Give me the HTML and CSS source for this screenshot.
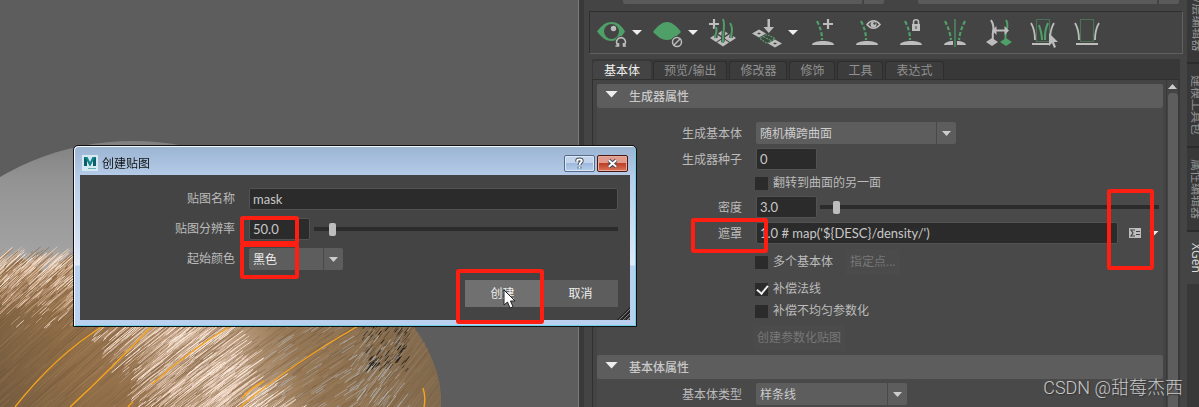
FILE: index.html
```html
<!DOCTYPE html>
<html lang="zh-CN">
<head>
    <meta charset="UTF-8">
    <meta name="viewport" content="width=device-width, initial-scale=1.0">
    <title>XGen</title>
    <link rel="stylesheet" href="styles.css">
</head>
<body>
    <div class="app">
        <main class="viewport">
            <canvas class="scene" id="scene" width="580" height="407"></canvas>
        </main>

        <section class="panel">
            <div class="top-bar">
                <select class="top-select" aria-label="集合"><option></option></select>
                <select class="top-select" aria-label="描述"><option></option></select>
            </div>

            <div class="toolbar">
                <button class="tool" type="button" aria-label="刷新预览">
                    <svg viewBox="0 0 30 30">
                        <path class="green" d="M1 13.500C6 7 10 4 15.500 4S25 7 29 13.500C25 20 21 23 15.500 23S6 20 1 13.500z"/>
                        <circle class="bg" cx="15.500" cy="13.500" r="7.500"/>
                        <circle class="grey" cx="17.500" cy="10.500" r="2.700"/>
                        <circle class="bg" cx="25" cy="24" r="6"/>
                        <path class="line-grey" stroke-width="1.600" d="M22 27.500A4.500 4.500 0 1 1 28 27.500M19.500 28h3v-3M30 28h-2.500v-3"/>
                    </svg>
                </button>
                <button class="arrow" type="button" aria-label="刷新选项"></button>
                <button class="tool" type="button" aria-label="禁用预览">
                    <svg viewBox="0 0 30 30">
                        <path class="green" d="M1 14C6 7 11 4 15 4s9 3 14 10c-5 5-9 8-14 8S6 19 1 14z"/>
                        <circle class="bg" cx="25" cy="24" r="6"/>
                        <circle class="line-grey" stroke-width="1.500" cx="25" cy="24" r="4.500"/>
                        <path class="line-grey" stroke-width="1.500" d="M22 27l6-6"/>
                    </svg>
                </button>
                <button class="arrow" type="button" aria-label="预览选项"></button>
                <button class="tool" type="button" aria-label="添加基本体">
                    <svg viewBox="0 0 30 30">
                        <path class="grey" d="M8 16l6 4-6 4-6-4zM15 20.500l6 4-6 4-6-4zM22 16l6 4-6 4-6-4zM15 12l5 3.500-5 3.500-5-3.500z"/>
                        <path class="line-grey" stroke-width="2.200" d="M6 1v10M1 6h10"/>
                        <path class="line-bg" stroke-width="3.500" d="M15 1c3 8-1 14 0 23M23 5c3 6 0 10 0 15M8 9c2 5-1 6 0 11"/>
                        <path class="line-green" stroke-width="2" d="M15 1c3 8-1 14 0 24M22 5c4 6 1 10 1 15M8 9c2 5-1 6-1 11"/>
                    </svg>
                </button>
                <button class="tool" type="button" aria-label="移动基本体">
                    <svg viewBox="0 0 30 30">
                        <path class="grey" d="M0 15.500l7-4 7 4-7 4zM16 25.500l7-4 7 4-7 4zM15.500 1h2.500v8h4l-5.200 6-5.300-6h4z"/>
                        <path class="bg" d="M5 15.500l2-1 2 1-2 1zM21 25.500l2-1 2 1-2 1z"/>
                        <path class="line-green" stroke-width="1.200" stroke-dasharray="2 1" d="M8 20.500l7-4 8 4-8 5zM11.500 18.500l7.500 4"/>
                    </svg>
                </button>
                <button class="arrow" type="button" aria-label="移动选项"></button>
                <button class="tool" type="button" aria-label="添加导向">
                    <svg viewBox="0 0 30 30">
                        <path class="grey" d="M4 27c0-3 6-4 11-4s11 1 11 4z"/>
                        <path class="line-green" stroke-width="2.200" stroke-dasharray="4 2" d="M9 3c3 6 5 11 5 19"/>
                        <path class="line-grey" stroke-width="2.200" d="M20 1v10M15 6h10"/>
                    </svg>
                </button>
                <button class="tool" type="button" aria-label="显示导向">
                    <svg viewBox="0 0 30 30">
                        <path class="grey" d="M4 27c0-3 6-4 11-4s11 1 11 4z"/>
                        <path class="line-green" stroke-width="2.200" stroke-dasharray="4 2" d="M9 3c3 6 5 11 5 19"/>
                        <path class="line-grey" stroke-width="1.600" d="M15 6.500c4-5 9-5 13 0-4 5-9 5-13 0z"/>
                        <circle class="grey" cx="21.500" cy="6.500" r="3"/>
                        <circle class="bg" cx="22.500" cy="5.500" r="1.200"/>
                    </svg>
                </button>
                <button class="tool" type="button" aria-label="锁定导向">
                    <svg viewBox="0 0 30 30">
                        <path class="grey" d="M4 27c0-3 6-4 11-4s11 1 11 4zM16 6h8v7h-8z"/>
                        <path class="line-green" stroke-width="2.200" stroke-dasharray="4 2" d="M9 3c3 6 5 11 5 19"/>
                        <path class="line-grey" stroke-width="1.600" d="M17.500 7V4c0-3 5-3 5 0v3"/>
                        <path class="bg" d="M19.500 8h1v3h-1z"/>
                    </svg>
                </button>
                <button class="tool" type="button" aria-label="镜像导向">
                    <svg viewBox="0 0 30 30">
                        <path class="grey" d="M4 27c0-2 4-4 9-4v4zM26 27c0-2-4-4-9-4v4z"/>
                        <path class="line-green" stroke-width="2.200" stroke-dasharray="4 2" d="M5 3c3 6 5 11 6 19M25 3c-3 6-5 11-6 19"/>
                        <path class="line-green" stroke-width="1.200" d="M15 1v28"/>
                    </svg>
                </button>
                <button class="tool" type="button" aria-label="传递基本体">
                    <svg viewBox="0 0 30 30">
                        <path class="grey" d="M8 20l6 4-6 4-6-4z"/>
                        <path class="green" d="M22 20l6 4-6 4-6-4z"/>
                        <path class="line-grey" stroke-width="2" d="M7 2c3 5 3 8 2 12s1 6-1 10"/>
                        <path class="line-green" stroke-width="2" d="M22 2c3 5 1 8 0 12s0 6-1 10"/>
                        <path class="line-bg" stroke-width="4" d="M11 12.500h11"/>
                        <path class="grey" d="M8 12.500l4.500-4.500v3.500h8V8l4.500 4.500-4.500 4.500v-3.500h-8V17z"/>
                    </svg>
                </button>
                <button class="tool" type="button" aria-label="选择基本体">
                    <svg viewBox="0 0 30 30">
                        <path class="line-grey" stroke-width="1.800" d="M3 5c3 5 4 10 4 17M26 5c-3 5-4 10-4 17"/>
                        <path class="grey" d="M4 25h17v2H4z"/>
                        <path class="line-green" stroke-width="1.200" stroke-dasharray="1 1" d="M8.500 1.500h13v22h-13z"/>
                        <path class="line-green" stroke-width="2" d="M11 7c2 6 3 9 3 15M20 5c-3 7-3 10-3 17"/>
                        <path class="grey" d="M21 15v13l3-3 2 5 2-1-2-5h4z"/>
                    </svg>
                </button>
                <button class="tool" type="button" aria-label="剔除基本体">
                    <svg viewBox="0 0 30 30">
                        <path class="line-grey" stroke-width="1.800" d="M3 5c3 5 4 10 4 17M27 5c-3 5-4 10-4 17"/>
                        <path class="grey" d="M4 25h22v2H4z"/>
                        <path class="line-green" stroke-width="1.200" stroke-dasharray="1 1" d="M8.500 1.500h13v22h-13z"/>
                    </svg>
                </button>
            </div>

            <div class="tabs">
                <button class="tab active" type="button">基本体</button>
                <button class="tab" type="button">预览/输出</button>
                <button class="tab" type="button">修改器</button>
                <button class="tab" type="button">修饰</button>
                <button class="tab" type="button">工具</button>
                <button class="tab" type="button">表达式</button>
            </div>

            <div class="panel-body">
                <div class="sections">
                    <button class="section-header" type="button"><span class="fold"></span>生成器属性</button>
                    <div class="group">
                        <div class="row">
                            <label class="label" for="generator">生成基本体</label>
                            <div class="combo combo-wide">
                                <select id="generator"><option>随机横跨曲面</option></select>
                            </div>
                        </div>
                        <div class="row">
                            <label class="label" for="seed">生成器种子</label>
                            <input class="field number" type="text" id="seed" value="0">
                        </div>
                        <div class="row row-check">
                            <label class="check"><input type="checkbox">翻转到曲面的另一面</label>
                        </div>
                        <div class="row">
                            <label class="label" for="density">密度</label>
                            <input class="field number" type="text" id="density" value="3.0">
                            <input class="slider" type="range" min="0" max="100" value="4" aria-label="密度">
                        </div>
                        <div class="row">
                            <label class="label" for="mask">遮罩</label>
                            <input class="field" type="text" id="mask" value="1.0 # map('${DESC}/density/')">
                            <button class="expression" type="button" aria-label="表达式">
                                <svg viewBox="0 0 12 10">
                                    <path class="grey" d="M0 0h12v10H0z"/>
                                    <path class="line-bg" stroke-width="1.200" d="M6 2H2l2 3-2 3h4M7 3.500h4M7 6.500h4"/>
                                </svg>
                            </button>
                            <button class="arrow" type="button" aria-label="遮罩选项"></button>
                            <span class="mark mark-mask"></span>
                            <span class="mark mark-menu"></span>
                        </div>
                        <div class="row row-check row-tall">
                            <label class="check"><input type="checkbox">多个基本体</label>
                            <button class="flat" type="button" disabled>指定点...</button>
                        </div>
                        <div class="row row-check">
                            <label class="check"><input type="checkbox" checked>补偿法线</label>
                        </div>
                        <div class="row row-check">
                            <label class="check"><input type="checkbox">补偿不均匀参数化</label>
                        </div>
                        <div class="row row-check row-tall">
                            <button class="flat flat-first" type="button" disabled>创建参数化贴图</button>
                        </div>
                    </div>

                    <button class="section-header" type="button"><span class="fold"></span>基本体属性</button>
                    <div class="group group-tight">
                        <div class="row">
                            <label class="label" for="primitive">基本体类型</label>
                            <div class="combo combo-medium">
                                <select id="primitive"><option>样条线</option></select>
                            </div>
                        </div>
                    </div>
                </div>
                <div class="scrollbar">
                    <span class="scroll-up"></span>
                    <span class="scroll-thumb"></span>
                </div>
            </div>
        </section>

        <nav class="side-tabs">
            <button class="side-tab side-first" type="button">通道盒/层编辑器</button>
            <button class="side-tab side-long" type="button">建模工具包</button>
            <button class="side-tab side-long" type="button">属性编辑器</button>
            <button class="side-tab side-active" type="button">XGen</button>
        </nav>

        <form class="dialog" onsubmit="return false">
            <div class="title-bar">
                <svg class="logo" viewBox="0 0 16 16">
                    <path fill="#d5eaf0" d="M0 0h16v16H0z"/>
                    <path fill="#12838b" d="M2 2h3.500L8 7l2.500-5H14v9h-3V6L8.500 11h-1L5 6v5H2z"/>
                    <path fill="#0b5d68" d="M2 11V2l3 4v5zM11 6l3-4v9h-3z"/>
                    <path fill="#6ab0b6" d="M6 13h8v1H6z"/>
                </svg>
                <h1 class="title">创建贴图</h1>
                <button class="window-button" type="button" aria-label="帮助">
                    <svg viewBox="0 0 14 14"><path class="outline" d="M4.500 5V4c0-2 5-2 5 0 0 2-2.500 2-2.500 4.500M7 10.500v2"/><path class="symbol" d="M4.500 5V4c0-2 5-2 5 0 0 2-2.500 2-2.500 4.500M7 10.500v2"/></svg>
                </button>
                <button class="window-button close" type="button" aria-label="关闭">
                    <svg viewBox="0 0 14 14"><path class="outline" d="M3 3.500l8 7M11 3.500l-8 7"/><path class="symbol" d="M3 3.500l8 7M11 3.500l-8 7"/></svg>
                </button>
            </div>
            <div class="dialog-body">
                <div class="dialog-row">
                    <label class="label" for="mapName">贴图名称</label>
                    <input class="field" type="text" id="mapName" value="mask">
                </div>
                <div class="dialog-row">
                    <label class="label" for="resolution">贴图分辨率</label>
                    <input class="field number" type="text" id="resolution" value="50.0">
                    <input class="slider" type="range" min="0" max="100" value="5" aria-label="贴图分辨率">
                </div>
                <div class="dialog-row">
                    <label class="label" for="startColor">起始颜色</label>
                    <div class="combo combo-small">
                        <select id="startColor"><option>黑色</option></select>
                    </div>
                </div>
                <div class="actions">
                    <button class="action primary" type="submit">创建</button>
                    <button class="action" type="button">取消</button>
                </div>
                <span class="grip"></span>
            </div>
            <span class="mark mark-resolution"></span>
            <span class="mark mark-color"></span>
            <span class="mark mark-create"></span>
            <svg class="cursor" viewBox="0 0 14 20"><path fill="#fff" stroke="#222" d="M1 1v15l3.500-3 2.500 6 3-1.200-2.500-5.800H12z"/></svg>
        </form>

        <div class="watermark">CSDN @甜莓杰西</div>
    </div>
    <script src="scene.js"></script>
</body>
</html>
```

FILE: styles.css
```css
* {
    box-sizing: border-box;
}

body {
    margin: 0;
    background: #444;
    color: #bbb;
    font-family: "Open Sans", "Noto Sans CJK SC", sans-serif;
    font-size: 12px;
    line-height: 16px;
}

button, input, select {
    margin: 0;
    padding: 0;
    border: 0;
    color: inherit;
    font: inherit;
}

button {
    background: none;
}

.app {
    position: relative;
    display: grid;
    grid-template-columns: minmax(0, 20fr) minmax(0, 21fr) 12px;
    height: 100vh;
    overflow: hidden;
}

/* 3D view */
.viewport {
    overflow: hidden;
    background: #5d5d5d;
    border-right: 1px solid #7a7a7a;
}

.scene {
    display: block;
}

/* XGen panel */
.panel {
    display: flex;
    flex-direction: column;
    min-height: 0;
    border-left: 5px solid #393939;
    background: #444;
}

.top-bar {
    display: flex;
    align-items: flex-end;
    gap: 34px;
    flex: none;
    height: 11px;
    padding: 0 8px 7px 39px;
    overflow: hidden;
}

.top-select {
    flex: 1;
    height: 22px;
    appearance: none;
    border-radius: 2px;
    background: linear-gradient(#444, #444) right 20px top / 2px 100% no-repeat #5a5a5a;
}

.toolbar {
    display: flex;
    align-items: center;
    gap: 14px;
    flex: none;
    height: 43px;
    margin: 0 4px 0 5px;
    padding: 0 6px;
    border: 1px solid #606060;
    border-top-color: #2e2e2e;
    border-left-color: #2e2e2e;
}

.tool {
    flex: none;
    width: 30px;
    height: 30px;
}

.tool svg, .expression svg {
    display: block;
    overflow: visible;
}

.arrow {
    flex: none;
    width: 10px;
    height: 5px;
    background: #eee;
    clip-path: polygon(0 0, 100% 0, 50% 100%);
}

.toolbar .arrow {
    margin: 0 -4px 0 -8px;
}

.green { fill: #4f9f68; }
.grey { fill: #bdbdbd; }
.bg { fill: #444; }
.line-green, .line-grey, .line-bg { fill: none; }
.line-green { stroke: #4f9f68; }
.line-grey { stroke: #bdbdbd; }
.line-bg { stroke: #444; }

.tabs {
    display: flex;
    align-items: flex-end;
    gap: 2px;
    flex: none;
    height: 20px;
    margin: 5px 7px 0 8px;
    padding-left: 1px;
    background: #383838;
}

.tab {
    height: 18px;
    padding: 0 10px;
    border: 1px solid #2e2e2e;
    border-bottom: 0;
    border-radius: 3px 3px 0 0;
    background: #3c3c3c;
    color: #919191;
    line-height: 17px;
    white-space: nowrap;
}

.tab.active {
    border-color: #444;
    background: #444;
    color: #eee;
}

.panel-body {
    display: flex;
    flex: 1;
    gap: 3px;
    min-height: 0;
    margin: 0 7px 0 8px;
    border-top: 1px solid #303030;
    border-left: 1px solid #303030;
}

.sections {
    flex: 1;
    min-width: 0;
    padding: 4px 0 0 4px;
}

.section-header {
    display: flex;
    align-items: center;
    gap: 11px;
    width: 100%;
    height: 24px;
    padding: 2px 0 0 8px;
    border-radius: 2px;
    background: #5d5d5d;
    color: #c8c8c8;
    font-weight: 500;
}

.fold {
    width: 13px;
    height: 7px;
    margin-bottom: 6px;
    background: #eee;
    clip-path: polygon(0 0, 100% 0, 50% 100%);
}

.group {
    display: flex;
    flex-direction: column;
    gap: 4px;
    padding: 14px 4px 3px 0;
    background: #494949;
}

.group-tight {
    padding-top: 4px;
}

.row, .dialog-row {
    position: relative;
    display: flex;
    align-items: center;
    height: 22px;
}

.label {
    flex: none;
    width: 145px;
    margin-right: 14px;
    text-align: right;
}

.row .label {
    padding-top: 1px;
}

.field {
    flex: 1;
    min-width: 0;
    height: 22px;
    padding: 0 3px;
    border: 1px solid #525252;
    border-radius: 2px;
    background: #2b2b2b;
    color: #c8c8c8;
    font-family: Lato, "Noto Sans CJK SC", sans-serif;
    font-size: 13px;
}

.field.number {
    flex: none;
    width: 61px;
}

.combo {
    position: relative;
    height: 22px;
    background: #5d5d5d;
    border-radius: 2px;
}

.combo select {
    width: 100%;
    height: 22px;
    padding: 1px 4px 0;
    appearance: none;
    background: linear-gradient(#494949, #494949) right 19px top / 1px 100% no-repeat;
    color: #ccc;
}

.combo::after {
    content: "";
    position: absolute;
    top: 9px;
    right: 5px;
    width: 9px;
    height: 5px;
    background: #ccc;
    clip-path: polygon(0 0, 100% 0, 50% 100%);
}

.combo-wide { width: 200px; }
.combo-medium { width: 151px; }
.combo-small { width: 94px; }

.slider {
    flex: 1;
    min-width: 0;
    height: 14px;
    margin-left: 3px;
    appearance: none;
    background: linear-gradient(#2b2b2b, #2b2b2b) center / 100% 4px no-repeat;
}

.slider::-webkit-slider-thumb {
    appearance: none;
    width: 7px;
    height: 13px;
    border-radius: 2px;
    background: #bdbdbd;
}

.row-check {
    height: 18px;
    padding-left: 158px;
}

.row-tall {
    height: 28px;
}

.check {
    display: flex;
    align-items: center;
    gap: 5px;
}

.check input {
    width: 13px;
    height: 13px;
    appearance: none;
    background: #2b2b2b;
}

.check input:checked::after {
    content: "";
    display: block;
    width: 9px;
    height: 5px;
    margin: 2px;
    border: solid #eee;
    border-width: 0 0 2px 2px;
    transform: rotate(-50deg);
}

.flat {
    height: 26px;
    margin-left: 13px;
    padding: 0 4px;
    background: #4b4b4b;
    color: #777;
}

.flat-first {
    margin-left: -2px;
}

.expression {
    flex: none;
    width: 12px;
    height: 10px;
    margin: 0 8px 0 11px;
}

.scrollbar {
    display: flex;
    flex-direction: column;
    align-items: center;
    gap: 4px;
    width: 14px;
    padding-top: 4px;
    border: solid #393939;
    border-width: 0 2px 0 1px;
}

.scroll-up {
    width: 9px;
    height: 5px;
    background: #ccc;
    clip-path: polygon(0 100%, 100% 100%, 50% 0);
}

.scroll-thumb {
    flex: 1;
    width: 10px;
    border-radius: 4px 4px 0 0;
    background: #5d5d5d;
}

/* Vertical tabs on the window edge */
.side-tabs {
    display: flex;
    flex-direction: column;
    overflow: hidden;
    background: #383838;
}

.side-tab {
    flex: none;
    width: 18px;
    padding: 11px 0;
    border-bottom: 2px solid #2b2b2b;
    color: #919191;
    white-space: nowrap;
    writing-mode: vertical-rl;
    text-orientation: sideways;
}

.side-first {
    display: flex;
    justify-content: flex-end;
    height: 64px;
}

.side-long {
    height: 84px;
}

.side-active {
    height: 52px;
    border-bottom: 0;
    background: #444;
    color: #ddd;
}

/* Create map dialog */
.dialog {
    position: absolute;
    top: 145px;
    left: 73px;
    width: 564px;
    padding: 0 6px 6px;
    border: 1px solid #111;
    border-radius: 5px 5px 0 0;
    background: linear-gradient(#9ab4d2, #b6cce8 30px, #dfe9f7 119px, #b9d0ee 120px);
    box-shadow: inset 1px 1px #f4f8fd, inset -1px -1px #6fd0e8;
}

.title-bar {
    display: flex;
    align-items: center;
    gap: 2px;
    height: 29px;
    padding: 5px 2px 0;
}

.logo {
    width: 16px;
    height: 16px;
}

.title {
    flex: 1;
    margin: 0 0 0 2px;
    padding-top: 2px;
    color: #111;
    font-size: 12px;
    font-weight: 400;
}

.window-button {
    width: 31px;
    height: 17px;
    border: 1px solid #566b8c;
    border-radius: 2px;
    background: linear-gradient(#c3d5ec 50%, #9db8da 50%, #b5d0ee);
    box-shadow: inset 0 0 0 1px #dbe7f5;
}

.window-button.close {
    border-color: #4a1712;
    background: linear-gradient(#e29a8c 45%, #c03f25 50%, #d9745a);
    box-shadow: inset 0 0 0 1px #e8ac9e;
}

.window-button svg {
    display: block;
    height: 13px;
    margin: auto;
}

.outline, .symbol { fill: none; }
.outline { stroke: #444b58; stroke-width: 4; }
.symbol { stroke: #fff; stroke-width: 2; }

.dialog-body {
    position: relative;
    display: flex;
    flex-direction: column;
    gap: 8px;
    height: 145px;
    padding: 13px 12px 12px 10px;
    background: #444;
}

.dialog-body .number + .slider {
    margin-left: 4px;
}

.dialog-body select {
    color: #eee;
}

.actions {
    display: flex;
    justify-content: flex-end;
    gap: 3px;
    margin-top: 2px;
}

.action {
    width: 75px;
    height: 27px;
    background: #5d5d5d;
    color: #eee;
}

.action.primary {
    background: #707070;
}

.grip {
    position: absolute;
    right: 0;
    bottom: 0;
    width: 13px;
    height: 13px;
    background: repeating-linear-gradient(135deg, #222 0 1px, #777 1px 2px, #333 2px 3px);
    clip-path: polygon(100% 0, 100% 100%, 0 100%);
}

.cursor {
    position: absolute;
    top: 143px;
    left: 429px;
    width: 14px;
    height: 20px;
}

/* Red callout frames */
.mark {
    position: absolute;
    border: 4px solid #ff1e12;
    border-radius: 3px;
    pointer-events: none;
}

.mark-resolution {
    top: 70px;
    left: 166px;
    width: 59px;
    height: 29px;
}

.mark-color {
    top: 97px;
    left: 166px;
    width: 59px;
    height: 36px;
}

.mark-create {
    top: 123px;
    left: 382px;
    width: 88px;
    height: 55px;
}

.mark-mask {
    top: -4px;
    left: 94px;
    width: 77px;
    height: 35px;
}

.mark-menu {
    top: -33px;
    right: 5px;
    width: 47px;
    height: 81px;
}

.watermark {
    position: absolute;
    right: 16px;
    bottom: 7px;
    color: #c8c8c8;
    font-family: Roboto, "Noto Sans CJK SC", sans-serif;
    font-size: 18px;
    font-weight: 300;
    line-height: 24px;
    text-shadow: 1px 1px 1px #333;
}
```

FILE: scene.js
```js
const canvas = document.getElementById('scene');
const ctx = canvas.getContext('2d');

// Fixed seed so the fur is the same on every load
let seed = 7;
function rand(min, max) {
    seed = (seed * 1664525 + 1013904223) % 4294967296;
    return min + (max - min) * seed / 4294967296;
}

// Sphere under the fur
const ball = ctx.createLinearGradient(0, 140, 0, 270);
ball.addColorStop(0, '#808080');
ball.addColorStop(0.3, '#939393');
ball.addColorStop(1, '#a6a6a6');
ctx.fillStyle = ball;
ctx.beginPath();
ctx.arc(133, 405, 264, 0, Math.PI * 2);
ctx.fill();
ctx.fillStyle = '#999';
ctx.beginPath();
ctx.moveTo(330, 300);
ctx.lineTo(409, 320);
ctx.lineTo(424, 352);
ctx.lineTo(330, 350);
ctx.fill();

// Fur silhouette
const fur = ctx.createLinearGradient(0, 407, 400, 250);
fur.addColorStop(0, '#755c3f');
fur.addColorStop(0.2, '#8f6d47');
fur.addColorStop(0.33, '#997450');
fur.addColorStop(0.42, '#c0a083');
fur.addColorStop(0.54, '#c9ab90');
fur.addColorStop(0.68, '#967856');
fur.addColorStop(1, '#80694e');
ctx.fillStyle = fur;
ctx.beginPath();
ctx.moveTo(0, 268);
ctx.lineTo(22, 258);
ctx.lineTo(46, 274);
ctx.lineTo(80, 250);
ctx.lineTo(400, 310);
ctx.quadraticCurveTo(444, 360, 441, 407);
ctx.lineTo(0, 407);
ctx.fill();

function hair(x, y, length, color, width) {
    const slope = x > 350 ? 1.3 : 0.92 - x / 1200;
    const dx = length / Math.hypot(1, slope);
    ctx.strokeStyle = color;
    ctx.lineWidth = width;
    ctx.beginPath();
    ctx.moveTo(x, y);
    ctx.quadraticCurveTo(x + dx * 0.48, y - dx * slope * 0.52, x + dx, y - dx * slope);
    ctx.stroke();
}

function scatter(count, x1, x2, y1, y2, lean, colors, min, max) {
    for (let i = 0; i < count; i++) {
        const y = rand(y1, y2);
        const x = rand(x1, x2) + (y - y1) * lean;
        hair(x, y, rand(min, max), colors[Math.floor(rand(0, colors.length))], rand(0.4, 1));
    }
}

ctx.save();
ctx.beginPath();
ctx.moveTo(0, 230);
ctx.lineTo(400, 230);
ctx.lineTo(413, 325);
ctx.quadraticCurveTo(438, 355, 441, 407);
ctx.lineTo(0, 407);
ctx.clip();
scatter(900, -50, 440, 305, 440, 0, ['#6b543a66', '#a9865f66', '#7d603f77', '#ac8d6866'], 30, 80);
scatter(420, -30, 70, 268, 315, 0, ['#f3d8c4', '#d2ad8b', '#b08a66', '#8c6a48'], 14, 34);
scatter(230, -30, 75, 262, 290, 0, ['#f8e0d0', '#fff0e3', '#e0c1a6', '#a07a55'], 8, 26);
scatter(70, -20, 75, 290, 330, 0, ['#c9a682', '#ecd3bf', '#79593a'], 6, 16);
scatter(620, 85, 185, 332, 440, 0.65, ['#f5dfd0', '#ffeadb', '#e4c8b0', '#b8977a', '#8d7050'], 14, 50);
scatter(260, 150, 215, 332, 440, 0.8, ['#fae5d8', '#ffefe4', '#9a7b5b'], 8, 36);
scatter(45, 85, 120, 335, 415, 0.6, ['#f5dfd0', '#8e6b47'], 4, 10);
scatter(210, 250, 400, 325, 425, 0, ['#a5a5a5', '#b0aca6', '#6e533888'], 4, 22);
scatter(35, 350, 390, 345, 407, -0.2, ['#aaa', '#b5b5b5'], 8, 20);
scatter(130, 362, 408, 325, 372, 0, ['#111', '#1a1a1a', '#999', '#594630'], 3, 9);
ctx.restore();

// Guides
ctx.strokeStyle = '#f7a51c';
ctx.lineWidth = 1.4;
[
    [15, 407, 55, 356, 103, 326],
    [70, 407, 112, 368, 151, 327],
    [152, 384, 190, 350, 229, 327],
    [240, 407, 292, 364, 358, 326],
    [128, 407, 130, 404, 133, 402],
    [242, 398, 250, 388, 264, 381],
    [424, 407, 426, 397, 423, 388]
].forEach(([x1, y1, cx, cy, x2, y2]) => {
    ctx.beginPath();
    ctx.moveTo(x1, y1);
    ctx.quadraticCurveTo(cx, cy, x2, y2);
    ctx.stroke();
});
```
